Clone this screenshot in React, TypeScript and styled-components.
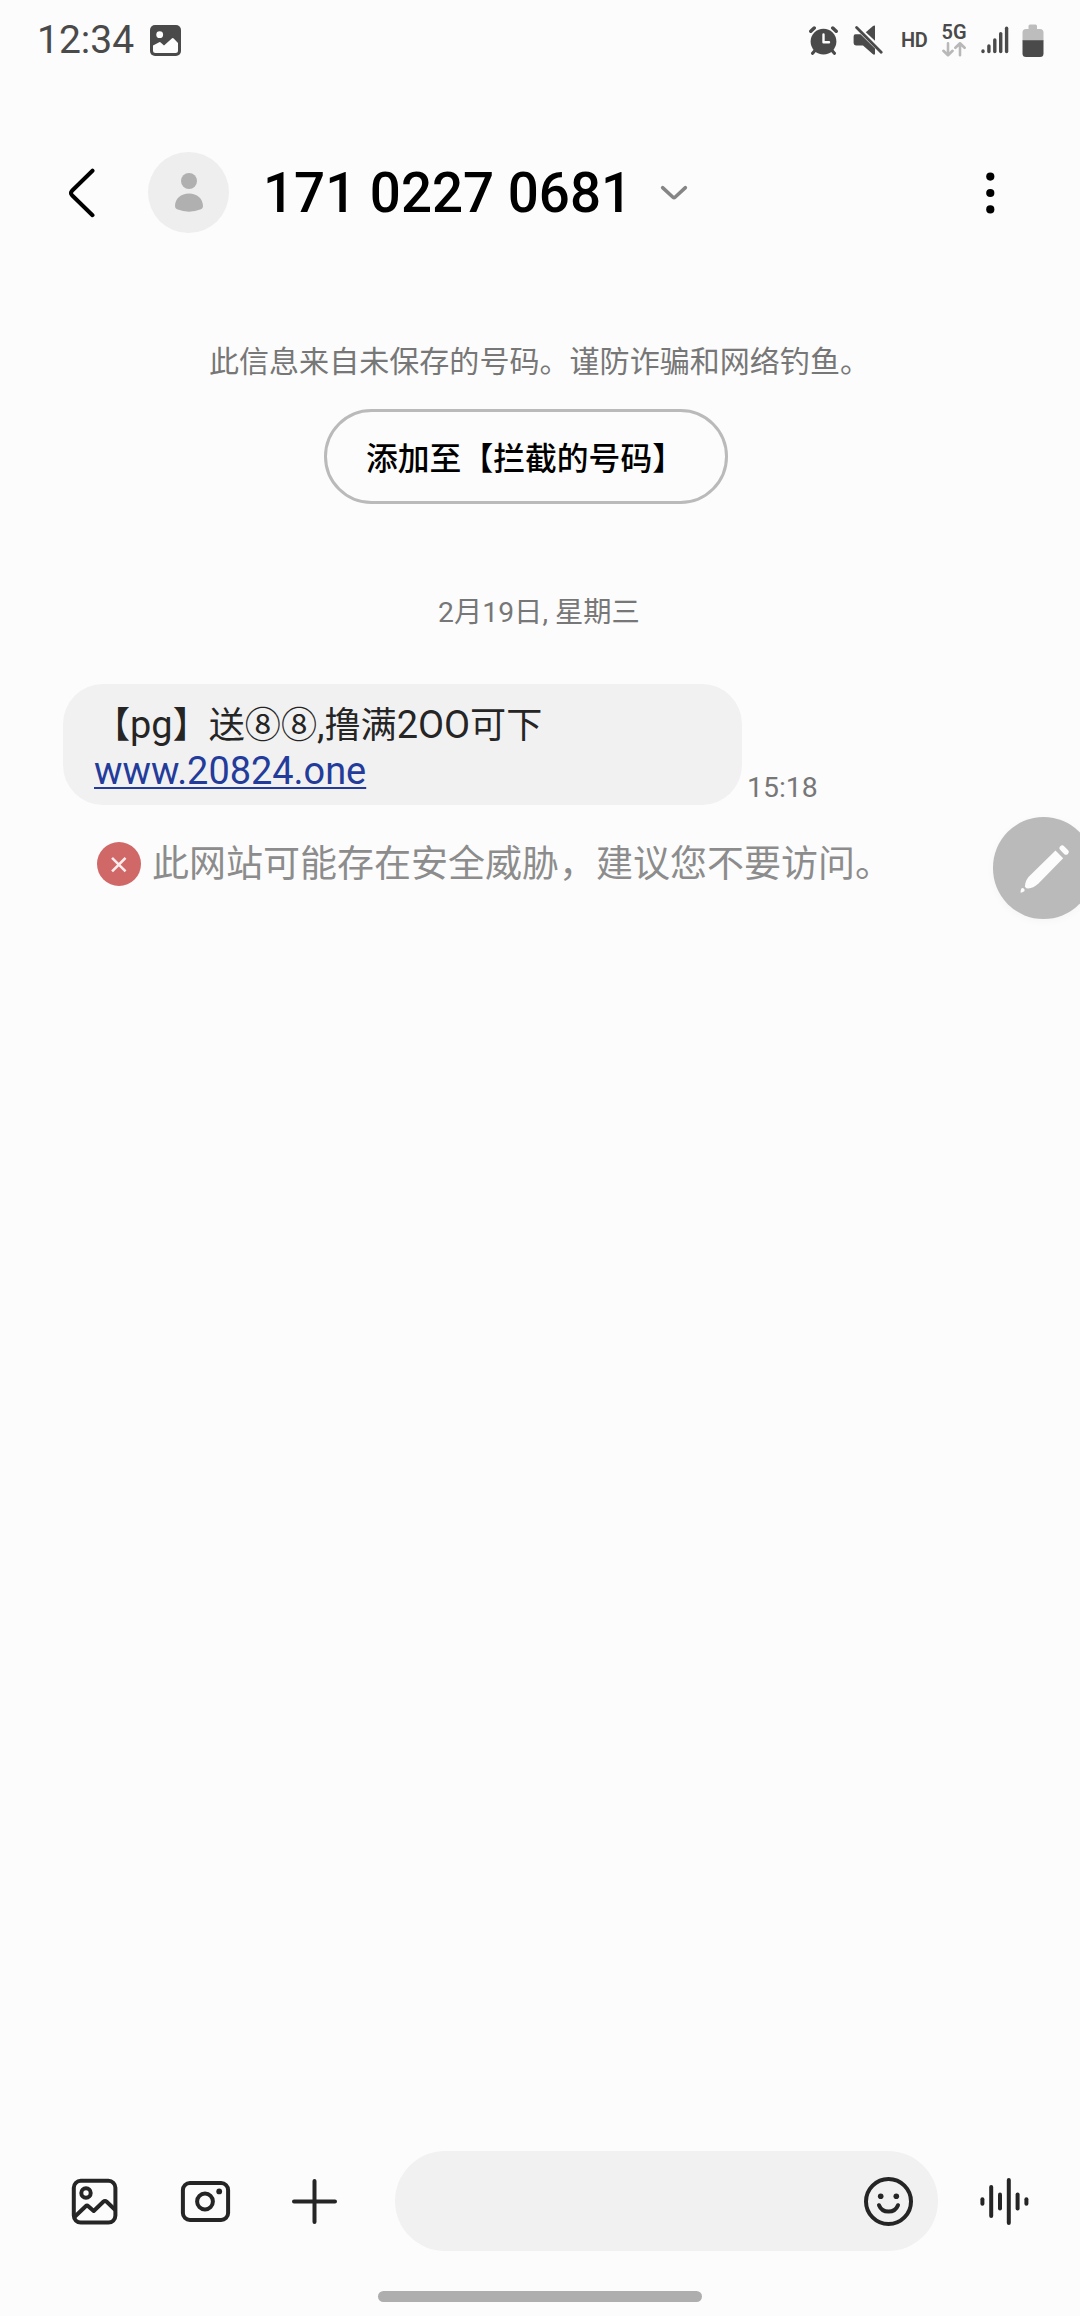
import React from "react";
import styled, { createGlobalStyle } from "styled-components";

const GlobalStyle = createGlobalStyle`
  html, body { margin: 0; padding: 0; background: #fcfcfc; }
  * { box-sizing: border-box; }
  svg { display: block; flex: none; }
`;

const Screen = styled.main`
  width: 1080px;
  height: 2316px;
  position: relative;
  overflow: hidden;
  display: flex;
  flex-direction: column;
  background: #fcfcfc;
  color: #252525;
  font-family: Roboto, "Noto Sans CJK SC", sans-serif;
`;

const StatusBar = styled.header`
  height: 80px;
  padding: 0 36px 0 37px;
  display: flex;
  align-items: center;
  color: #4a4a4a;
`;

const Clock = styled.span`
  font-size: 39px;
  line-height: 80px;
  width: 113px;
`;

const StatusIcons = styled.div`
  margin-left: auto;
  display: flex;
  align-items: center;
`;

const StatusGlyph = styled.svg<{ $before?: number }>`
  margin-left: ${(p) => p.$before ?? 0}px;
`;

const HdLabel = styled.span`
  width: 26px;
  margin: 0 0 1px 18px;
  font-size: 20px;
  font-weight: 600;
  line-height: 22px;
  letter-spacing: -0.4px;
`;

const Network = styled.div`
  width: 26px;
  margin: 0 14px 0 14px;
  display: flex;
  flex-direction: column;
  align-items: center;
`;

const NetworkLabel = styled.span`
  font-size: 20px;
  font-weight: 600;
  line-height: 19px;
`;

const TitleBar = styled.section`
  height: 226px;
  padding: 0 83px 0 68px;
  display: flex;
  align-items: center;
`;

const Avatar = styled.div`
  width: 81px;
  height: 81px;
  margin: 0 34px 2px 52px;
  border-radius: 50%;
  background: #eeeeee;
  display: flex;
  align-items: center;
  justify-content: center;
`;

const Title = styled.h1`
  margin: 0 35px 0 0;
  width: 362px;
  white-space: nowrap;
  color: #000;
  font-size: 54.7px;
  font-weight: 500;
  line-height: 64px;
`;

const Spacer = styled.div`
  flex: 1;
`;

const Conversation = styled.section`
  flex: 1;
  padding-top: 36px;
  display: flex;
  flex-direction: column;
  align-items: center;
`;

const Notice = styled.p`
  margin: 0;
  padding-right: 1px;
  font-size: 30.05px;
  line-height: 40px;
  color: #777;
  white-space: nowrap;
`;

const BlockButton = styled.button`
  width: 404px;
  height: 95px;
  margin: 27px 28px 0 0;
  padding: 5px 0 0 39px;
  border: 3px solid #bababa;
  border-radius: 48px;
  background: transparent;
  color: #000;
  font-family: inherit;
  font-size: 31.8px;
  font-weight: 500;
  line-height: 40px;
  text-align: left;
  white-space: nowrap;
`;

const DateLine = styled.p`
  margin: 89px 2px 0 0;
  font-size: 28.3px;
  line-height: 40px;
  color: #777;
  white-space: nowrap;
`;

const MessageRow = styled.div`
  width: 100%;
  margin-top: 51px;
  padding-left: 63px;
  display: flex;
  align-items: flex-end;
  gap: 5px;
`;

const Bubble = styled.div`
  width: 679px;
  height: 121px;
  padding: 18px 31px 0;
  border-radius: 40px;
  background: #f1f1f1;
  font-size: 37.9px;
`;

const MessageLine = styled.div`
  height: 46px;
  line-height: 46px;
  white-space: nowrap;
`;

const Han = styled.span`
  font-size: 36.1px;
  line-height: 1;
`;

const Link = styled.a`
  color: #233c9b;
  text-decoration: underline;
  text-decoration-thickness: 2px;
  text-underline-offset: 3px;
  text-decoration-skip-ink: none;
`;

const SentAt = styled.time`
  font-size: 28.4px;
  line-height: 35px;
  color: #777;
`;

const Warning = styled.div`
  width: 100%;
  margin-top: 34px;
  padding-left: 97px;
  display: flex;
  align-items: center;
  gap: 11px;
  font-size: 37px;
  line-height: 50px;
  color: #8c8c8c;
  white-space: nowrap;
`;

const WarningText = styled.span`
  height: 50px;
  line-height: 52px;
`;

const EditHandle = styled.button`
  position: absolute;
  top: 817px;
  right: -14px;
  width: 101.5px;
  height: 101.5px;
  padding: 0;
  border: 0;
  border-radius: 50%;
  background: #bababa;
  box-shadow: 0 2px 8px rgba(0, 0, 0, 0.03);
`;

const Composer = styled.footer`
  height: 100px;
  padding: 0 51px 0 72px;
  display: flex;
  align-items: center;
`;

const ComposerTools = styled.div`
  width: 323px;
  display: flex;
  align-items: center;
`;

const ToolIcon = styled.svg<{ $gap?: number }>`
  margin-right: ${(p) => p.$gap ?? 0}px;
  stroke: #252525;
  stroke-width: 4;
  stroke-linecap: round;
  stroke-linejoin: round;
  fill: none;
  overflow: visible;
`;

const Field = styled.div`
  width: 543px;
  height: 100px;
  margin-right: 42px;
  padding-right: 25px;
  border-radius: 50px;
  background: #f1f1f1;
  display: flex;
  align-items: center;
  justify-content: flex-end;
`;

const HomeArea = styled.div`
  height: 65px;
  padding-top: 40px;
  display: flex;
  justify-content: center;
`;

const HomeBar = styled.div`
  width: 324px;
  height: 11px;
  border-radius: 6px;
  background: #aeaeae;
`;

const PictureBadge = () => (
  <svg width="31" height="31" viewBox="0 0 31 31">
    <rect width="31" height="31" rx="5" fill="#4a4a4a" />
    <circle cx="9.7" cy="9.7" r="3.4" fill="#fcfcfc" />
    <path d="M3 20.5 L9.2 17.2 Q10 16.8 10.7 17.4 L14 20.6 L21.8 13.4 Q22.8 12.6 23.7 13.4 L28 18 V25.5 Q28 28 25.5 28 H5.5 Q3 28 3 25.5 Z" fill="#fcfcfc" />
  </svg>
);

const AlarmIcon = () => (
  <StatusGlyph width="29" height="29" viewBox="0 0 29 29">
    <g stroke="#4a4a4a" strokeLinecap="round" fill="none">
      <path d="M1.8 5.2 L5.2 2 M23.8 2 L27.2 5.2" strokeWidth="3.5" />
      <path d="M6 24.5 L3.6 27.2 M23 24.5 L25.4 27.2" strokeWidth="3.2" />
    </g>
    <circle cx="14.5" cy="15.6" r="12.9" fill="#4a4a4a" />
    <path d="M14.5 8.5 V16.3 H20" stroke="#fcfcfc" strokeWidth="2.4" strokeLinecap="round" strokeLinejoin="round" fill="none" />
  </StatusGlyph>
);

const MuteIcon = () => (
  <StatusGlyph $before={15} width="30" height="30" viewBox="0 0 30 30">
    <path d="M22 .8 V15.8 L12.8 7.2 L20 1 Q21.5 .1 22 .8 Z" fill="#4a4a4a" />
    <path d="M2.5 9.3 H7.5 L22 23.6 V29 Q21.3 30.3 19.7 29 L10 20.4 H3 Q.6 20.4 .6 18 V11.5 Q.6 9.3 2.5 9.3 Z" fill="#4a4a4a" />
    <path d="M3.6 2.4 L28.2 27.2" stroke="#4a4a4a" strokeWidth="2.8" strokeLinecap="round" />
  </StatusGlyph>
);

const DataArrows = () => (
  <svg width="24" height="15" viewBox="0 0 24 15" fill="none" stroke="#b8b8b8" strokeWidth="2.6" strokeLinecap="round" strokeLinejoin="round">
    <path d="M6 1.3 V13.3 M1.4 8.8 L6 13.3 L10.6 8.8 M18 13.3 V1.3 M13.4 5.8 L18 1.3 L22.6 5.8" />
  </svg>
);

const signalBars = [
  { x: 2, y: 25 },
  { x: 7.9, y: 20 },
  { x: 13.8, y: 14 },
  { x: 19.7, y: 7.6 },
  { x: 25.6, y: 2.2 },
];

const SignalIcon = () => (
  <StatusGlyph width="28" height="28" viewBox="0 0 28 28" stroke="#4a4a4a" strokeWidth="3.4" strokeLinecap="round">
    {signalBars.map((bar) => (
      <path key={bar.x} d={`M${bar.x} ${bar.y} V25.6`} />
    ))}
  </StatusGlyph>
);

const BatteryIcon = () => (
  <StatusGlyph $before={13} width="22" height="33" viewBox="0 0 22 33">
    <path d="M6.5 5 V2 Q6.5 .5 8 .5 H13.5 Q15 .5 15 2 V5 H18 Q21.5 5 21.5 8.5 V17 H.5 V8.5 Q.5 5 4 5 Z" fill="#bdbdbd" />
    <path d="M.5 16.3 H21.5 V29.5 Q21.5 33 18 33 H4 Q.5 33 .5 29.5 Z" fill="#4a4a4a" />
  </StatusGlyph>
);

const BackIcon = () => (
  <svg width="28" height="50" viewBox="0 0 28 50" fill="none" stroke="#000" strokeWidth="4" strokeLinecap="round" strokeLinejoin="round">
    <path d="M24.5 2.7 L4 22.8 Q2 25 4 27.2 L24.5 47.2" />
  </svg>
);

const PersonIcon = () => (
  <svg width="28" height="39" viewBox="0 0 28 39" fill="#b0b0b0">
    <circle cx="14" cy="8" r="8" />
    <path d="M0 33 C0 25.5 6 20.4 14 20.4 C22 20.4 28 25.5 28 33 Q28 35.7 26 36.3 Q14 41 2 36.3 Q0 35.7 0 33 Z" />
  </svg>
);

const ChevronIcon = () => (
  <svg width="28" height="16" viewBox="0 0 28 16" fill="none" stroke="#858585" strokeWidth="3.5" strokeLinecap="round" strokeLinejoin="round">
    <path d="M2.6 2.6 L13 12.3 Q14 13.2 15 12.3 L25.4 2.6" />
  </svg>
);

const MoreIcon = () => (
  <svg width="14" height="42" viewBox="0 0 14 42" fill="#000">
    <circle cx="7.3" cy="4.6" r="4.1" />
    <circle cx="7.3" cy="21" r="4.1" />
    <circle cx="7.3" cy="37.4" r="4.1" />
  </svg>
);

const ThreatIcon = () => (
  <svg width="44" height="44" viewBox="0 0 44 44">
    <circle cx="22" cy="22" r="22" fill="#d06868" />
    <path d="M16 16.8 L27.6 28.4 M27.6 16.8 L16 28.4" stroke="#fcecec" strokeWidth="2.6" strokeLinecap="square" />
  </svg>
);

const PencilIcon = () => (
  <svg width="102" height="102" viewBox="0 0 102 102" fill="#fcfcfc">
    <path d="M62.5 33.5 L70.2 41.2 L45.5 66.6 Q39 72.3 33.5 71.3 L31.9 69.7 Q32 62.5 38 57.5 Z" />
    <path d="M69.2 31.2 L73 35" stroke="#fcfcfc" strokeWidth="5.4" strokeLinecap="round" />
    <path d="M28.6 71.2 Q30 70.8 31 71.8 Q32.2 73 31.3 74.2 Q29.5 75.5 27.5 75.8 Q27.3 73 28.6 71.2 Z" />
  </svg>
);

const GalleryIcon = () => (
  <ToolIcon $gap={64} width="45" height="45" viewBox="0 0 45 45">
    <rect x="1.8" y="1.8" width="41.6" height="41.8" rx="7" />
    <circle cx="14" cy="14" r="4.7" />
    <path d="M3 37.5 L13.7 27.2 Q15 26 16.3 27.2 L21.7 32 L31.3 22.8 Q33 21.2 34.7 22.8 L42.5 30.3" />
  </ToolIcon>
);

const CameraIcon = () => (
  <ToolIcon $gap={62} width="49" height="41" viewBox="0 0 49 41">
    <rect x="1.9" y="2" width="45.2" height="37" rx="7" />
    <circle cx="24" cy="20.5" r="7.9" />
    <circle cx="38.2" cy="10.4" r="2.9" fill="#252525" stroke="none" />
  </ToolIcon>
);

const PlusIcon = () => (
  <ToolIcon width="45" height="45" viewBox="0 0 45 45">
    <path d="M22.5 2 V43 M2 22.5 H43" />
  </ToolIcon>
);

const SmileIcon = () => (
  <ToolIcon width="49" height="49" viewBox="0 0 49 49">
    <circle cx="24.5" cy="24.5" r="22.5" />
    <circle cx="16.7" cy="19.3" r="2.8" fill="#252525" stroke="none" />
    <circle cx="32.3" cy="19.3" r="2.8" fill="#252525" stroke="none" />
    <path d="M15 28.2 C18.4 36.7 30.6 36.7 34 28.2" />
  </ToolIcon>
);

const waveBars = [8.5, 33, 18, 47, 18, 8.5];

const VoiceIcon = () => (
  <ToolIcon width="49" height="49" viewBox="0 0 49 49">
    {waveBars.map((h, i) => (
      <path key={i} d={`M${2.4 + i * 8.8} ${24.5 - h / 2 + 2} V${24.5 + h / 2 - 2}`} />
    ))}
  </ToolIcon>
);

export default function App() {
  return (
    <>
      <GlobalStyle />
      <Screen>
        <StatusBar>
          <Clock>12:34</Clock>
          <PictureBadge />
          <StatusIcons>
            <AlarmIcon />
            <MuteIcon />
            <HdLabel>HD</HdLabel>
            <Network>
              <NetworkLabel>5G</NetworkLabel>
              <DataArrows />
            </Network>
            <SignalIcon />
            <BatteryIcon />
          </StatusIcons>
        </StatusBar>

        <TitleBar>
          <BackIcon />
          <Avatar>
            <PersonIcon />
          </Avatar>
          <Title>171 0227 0681</Title>
          <ChevronIcon />
          <Spacer />
          <MoreIcon />
        </TitleBar>

        <Conversation>
          <Notice>此信息来自未保存的号码。谨防诈骗和网络钓鱼。</Notice>
          <BlockButton>添加至【拦截的号码】</BlockButton>
          <DateLine>2月19日, 星期三</DateLine>
          <MessageRow>
            <Bubble>
              <MessageLine>
                <Han>【</Han>pg<Han>】送⑧⑧</Han>,<Han>撸满</Han>2OO<Han>可下</Han>
              </MessageLine>
              <MessageLine>
                <Link>www.20824.one</Link>
              </MessageLine>
            </Bubble>
            <SentAt>15:18</SentAt>
          </MessageRow>
          <Warning>
            <ThreatIcon />
            <WarningText>此网站可能存在安全威胁，建议您不要访问。</WarningText>
          </Warning>
        </Conversation>

        <Composer>
          <ComposerTools>
            <GalleryIcon />
            <CameraIcon />
            <PlusIcon />
          </ComposerTools>
          <Field>
            <SmileIcon />
          </Field>
          <VoiceIcon />
        </Composer>
        <HomeArea>
          <HomeBar />
        </HomeArea>

        <EditHandle aria-label="编辑">
          <PencilIcon />
        </EditHandle>
      </Screen>
    </>
  );
}
